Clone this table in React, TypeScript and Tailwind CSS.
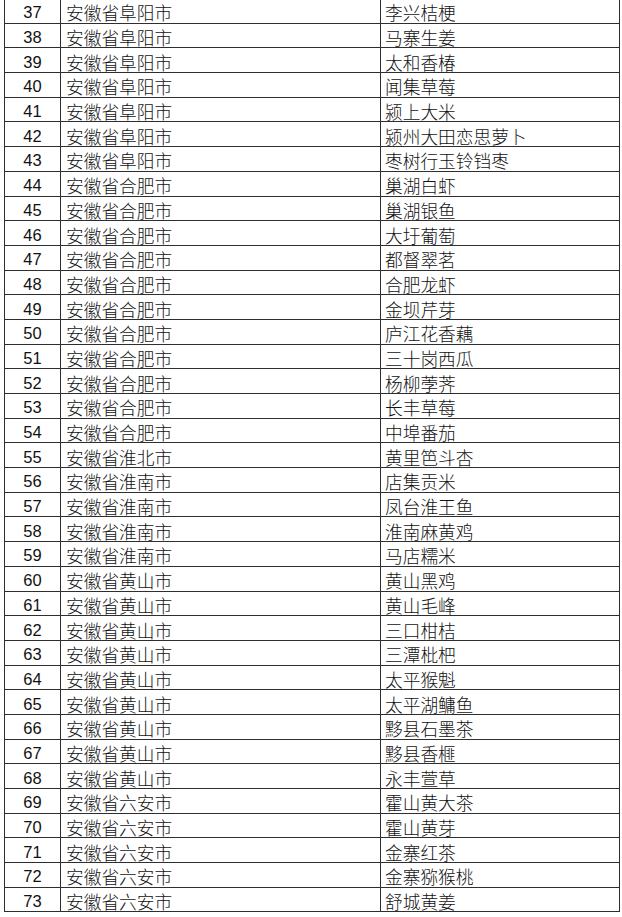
import React from "react";

const rows: [number, string, string][] = [
  [37, "安徽省阜阳市", "李兴桔梗"],
  [38, "安徽省阜阳市", "马寨生姜"],
  [39, "安徽省阜阳市", "太和香椿"],
  [40, "安徽省阜阳市", "闻集草莓"],
  [41, "安徽省阜阳市", "颍上大米"],
  [42, "安徽省阜阳市", "颍州大田恋思萝卜"],
  [43, "安徽省阜阳市", "枣树行玉铃铛枣"],
  [44, "安徽省合肥市", "巢湖白虾"],
  [45, "安徽省合肥市", "巢湖银鱼"],
  [46, "安徽省合肥市", "大圩葡萄"],
  [47, "安徽省合肥市", "都督翠茗"],
  [48, "安徽省合肥市", "合肥龙虾"],
  [49, "安徽省合肥市", "金坝芹芽"],
  [50, "安徽省合肥市", "庐江花香藕"],
  [51, "安徽省合肥市", "三十岗西瓜"],
  [52, "安徽省合肥市", "杨柳荸荠"],
  [53, "安徽省合肥市", "长丰草莓"],
  [54, "安徽省合肥市", "中埠番茄"],
  [55, "安徽省淮北市", "黄里笆斗杏"],
  [56, "安徽省淮南市", "店集贡米"],
  [57, "安徽省淮南市", "凤台淮王鱼"],
  [58, "安徽省淮南市", "淮南麻黄鸡"],
  [59, "安徽省淮南市", "马店糯米"],
  [60, "安徽省黄山市", "黄山黑鸡"],
  [61, "安徽省黄山市", "黄山毛峰"],
  [62, "安徽省黄山市", "三口柑桔"],
  [63, "安徽省黄山市", "三潭枇杷"],
  [64, "安徽省黄山市", "太平猴魁"],
  [65, "安徽省黄山市", "太平湖鳙鱼"],
  [66, "安徽省黄山市", "黟县石墨茶"],
  [67, "安徽省黄山市", "黟县香榧"],
  [68, "安徽省黄山市", "永丰萱草"],
  [69, "安徽省六安市", "霍山黄大茶"],
  [70, "安徽省六安市", "霍山黄芽"],
  [71, "安徽省六安市", "金寨红茶"],
  [72, "安徽省六安市", "金寨猕猴桃"],
  [73, "安徽省六安市", "舒城黄姜"],
];

export default function App() {
  return (
    <div className="w-[622px] h-[917px] overflow-hidden bg-white">
      <table className="ml-[4px] mt-[-2px] w-[615px] table-fixed border-collapse text-[#111]">
        <colgroup>
          <col className="w-[56px]" />
          <col className="w-[320px]" />
          <col className="w-[239px]" />
        </colgroup>
        <tbody>
          {rows.map(([n, a, b]) => (
            <tr key={n} className="h-[24.7px]">
              <td className="border border-[#2e2e2e] p-0 pt-[3px] text-center align-middle font-['Liberation_Sans',Arial,sans-serif] text-[16.5px] leading-[20px]">
                {n}
              </td>
              <td className="border border-[#2e2e2e] p-0 pl-[5px] pt-[3px] align-middle font-['Noto_Sans_CJK_SC',sans-serif] text-[17.7px] font-light leading-[20px] whitespace-nowrap">
                {a}
              </td>
              <td className="border border-[#2e2e2e] p-0 pl-[4px] pt-[3px] align-middle font-['Noto_Sans_CJK_SC',sans-serif] text-[17.7px] font-light leading-[20px] whitespace-nowrap">
                {b}
              </td>
            </tr>
          ))}
        </tbody>
      </table>
    </div>
  );
}
